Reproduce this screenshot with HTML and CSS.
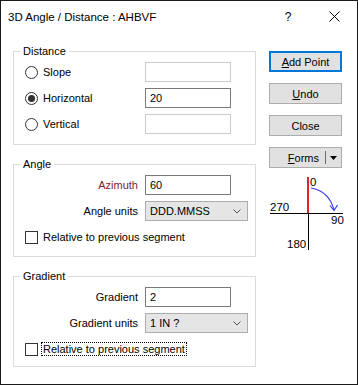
FILE: index.html
```html
<!DOCTYPE html>
<html>
<head>
<meta charset="utf-8">
<link rel="stylesheet" href="styles.css">
</head>
<body>
<div class="window">
  <div class="titlebar">
    <span class="title">3D Angle / Distance : AHBVF</span>
    <span class="cap-btn help">?</span>
    <span class="cap-btn close"><svg width="11" height="11" viewBox="0 0 11 11"><path d="M0.5 0.5 L10.5 10.5 M10.5 0.5 L0.5 10.5" stroke="#000" stroke-width="1" fill="none"/></svg></span>
  </div>
  <div class="content">
    <div class="left">
      <fieldset class="group">
        <legend>Distance</legend>
        <div class="gbody gb-dist">
          <div class="row">
            <span class="opt"><span class="radio"></span>Slope</span>
            <span class="tbox disabled"></span>
          </div>
          <div class="row">
            <span class="opt"><span class="radio checked"></span>Horizontal</span>
            <span class="tbox">20</span>
          </div>
          <div class="row">
            <span class="opt"><span class="radio"></span>Vertical</span>
            <span class="tbox disabled"></span>
          </div>
        </div>
      </fieldset>
      <fieldset class="group gap">
        <legend>Angle</legend>
        <div class="gbody gb-angle">
          <div class="row">
            <span class="lbl azimuth">Azimuth</span>
            <span class="tbox">60</span>
          </div>
          <div class="row">
            <span class="lbl">Angle units</span>
            <span class="combo">DDD.MMSS<svg class="chev" width="8" height="5" viewBox="0 0 8 5"><path d="M0.5 0.5 L4 4 L7.5 0.5" stroke="#555" stroke-width="1" fill="none"/></svg></span>
          </div>
          <div class="crow">
            <span class="check"></span><span class="clbl">Relative to previous segment</span>
          </div>
        </div>
      </fieldset>
      <fieldset class="group gap">
        <legend>Gradient</legend>
        <div class="gbody gb-grad">
          <div class="row">
            <span class="lbl">Gradient</span>
            <span class="tbox">2</span>
          </div>
          <div class="row">
            <span class="lbl">Gradient units</span>
            <span class="combo">1 IN ?<svg class="chev" width="8" height="5" viewBox="0 0 8 5"><path d="M0.5 0.5 L4 4 L7.5 0.5" stroke="#555" stroke-width="1" fill="none"/></svg></span>
          </div>
          <div class="crow">
            <span class="check"></span><span class="clbl focus">Relative to previous segment</span>
          </div>
        </div>
      </fieldset>
    </div>
    <div class="right">
      <div class="btn default"><u>A</u>dd Point</div>
      <div class="btn"><u>U</u>ndo</div>
      <div class="btn">Close</div>
      <div class="btn split"><span class="split-text"><u>F</u>orms</span><span class="split-sep"></span><span class="split-arrow"><svg width="7" height="4" viewBox="0 0 7 4"><path d="M0 0 L7 0 L3.5 4 Z" fill="#000"/></svg></span></div>
      <svg class="compass" width="77" height="80" viewBox="0 0 77 80">
        <rect x="1" y="41" width="73" height="1" fill="#000"/>
        <rect x="39" y="41" width="1" height="37" fill="#000"/>
        <rect x="38" y="5" width="2" height="36" fill="#e8202a"/>
        <path d="M42 16 Q60 19 65 38" stroke="#3b3bff" stroke-width="1.2" fill="none"/>
        <path d="M61 33.5 L65 38.5 L68.5 33" stroke="#3b3bff" stroke-width="1.2" fill="none"/>
        <text x="41" y="13.5">0</text>
        <text x="1" y="39">270</text>
        <text x="62" y="52">90</text>
        <text x="18" y="75.5">180</text>
      </svg>
    </div>
  </div>
</div>
</body>
</html>
```

FILE: styles.css
```css
html, body {
  margin: 0;
  padding: 0;
  background: #fff;
}

body {
  font-family: "Liberation Sans", Arial, sans-serif;
  font-size: 11px;
  color: #000;
}

.window {
  width: 358px;
  height: 385px;
  box-sizing: border-box;
  border: 1px solid #1a1a1a;
  background: #fff;
  overflow: hidden;
}

.titlebar {
  height: 30px;
  display: flex;
  align-items: center;
}

.title {
  flex: 1;
  padding-left: 7px;
  font-size: 11.5px;
  padding-top: 1px;
}

.cap-btn {
  width: 46px;
  height: 30px;
  display: flex;
  align-items: center;
  justify-content: center;
}

.help {
  font-size: 12px;
  padding-top: 1px;
  box-sizing: border-box;
}

.close svg {
  display: block;
}

.content {
  display: flex;
  padding: 13px 0 0 12px;
}

.left {
  width: 243px;
}

.group {
  margin: 0;
  padding: 0;
  border: 1px solid #dcdcdc;
  min-width: 0;
}

.group.gap {
  margin-top: 12px;
}

.group legend {
  margin-left: 6px;
  padding: 0 3px;
  line-height: 15px;
  height: 15px;
}

.gbody {
  padding: 3px 0 0 11px;
  display: flex;
  flex-direction: column;
  gap: 6px;
}

.gb-dist { padding-bottom: 10px; }
.gb-angle { padding-bottom: 9px; }
.gb-grad { padding-bottom: 7px; }

.row {
  display: flex;
  align-items: center;
  height: 20px;
}

.opt {
  width: 120px;
  display: flex;
  align-items: center;
}

.radio {
  width: 13px;
  height: 13px;
  box-sizing: border-box;
  border: 1px solid #333;
  border-radius: 50%;
  margin-right: 5px;
  display: flex;
  align-items: center;
  justify-content: center;
  background: #fff;
}

.radio.checked::after {
  content: "";
  width: 7px;
  height: 7px;
  border-radius: 50%;
  background: #333;
}

.lbl {
  width: 113px;
  margin-right: 7px;
  text-align: right;
}

.azimuth {
  color: #7d1d2e;
}

.tbox {
  width: 86px;
  height: 20px;
  box-sizing: border-box;
  border: 1px solid #7a7a7a;
  padding-left: 4px;
  line-height: 18px;
  background: #fff;
}

.tbox.disabled {
  border-color: #cccccc;
}

.combo {
  width: 103px;
  height: 20px;
  box-sizing: border-box;
  border: 1px solid #adadad;
  background: #e5e5e5;
  padding-left: 4px;
  line-height: 18px;
  display: flex;
  align-items: center;
  justify-content: space-between;
}

.chev {
  margin-right: 6px;
  display: block;
}

.crow {
  display: flex;
  align-items: center;
  height: 20px;
}

.check {
  width: 13px;
  height: 13px;
  box-sizing: border-box;
  border: 1px solid #333;
  background: #fff;
  margin-right: 3px;
}

.clbl {
  padding: 0 1px;
  line-height: 12px;
  border: 1px solid transparent;
}

.clbl.focus {
  border: 1px dotted #000;
}

.right {
  margin-left: 13px;
  margin-top: 7px;
  width: 73px;
  display: flex;
  flex-direction: column;
}

.btn {
  height: 21px;
  box-sizing: border-box;
  border: 1px solid #adadad;
  background: #e1e1e1;
  display: flex;
  align-items: center;
  justify-content: center;
  margin-bottom: 11px;
}

.btn.default {
  border: 2px solid #0078d7;
}

.btn.split {
  justify-content: flex-end;
  margin-bottom: 4px;
}

.split-text {
  padding-right: 6px;
}

.split-sep {
  width: 1px;
  height: 13px;
  background: #6d6d6d;
}

.split-arrow {
  width: 15px;
  display: flex;
  align-items: center;
  justify-content: center;
}

.split-arrow svg {
  display: block;
}

.compass {
  display: block;
  overflow: visible;
}

.compass text {
  font-family: "Liberation Sans", Arial, sans-serif;
  font-size: 11.5px;
  fill: #000;
}
```
